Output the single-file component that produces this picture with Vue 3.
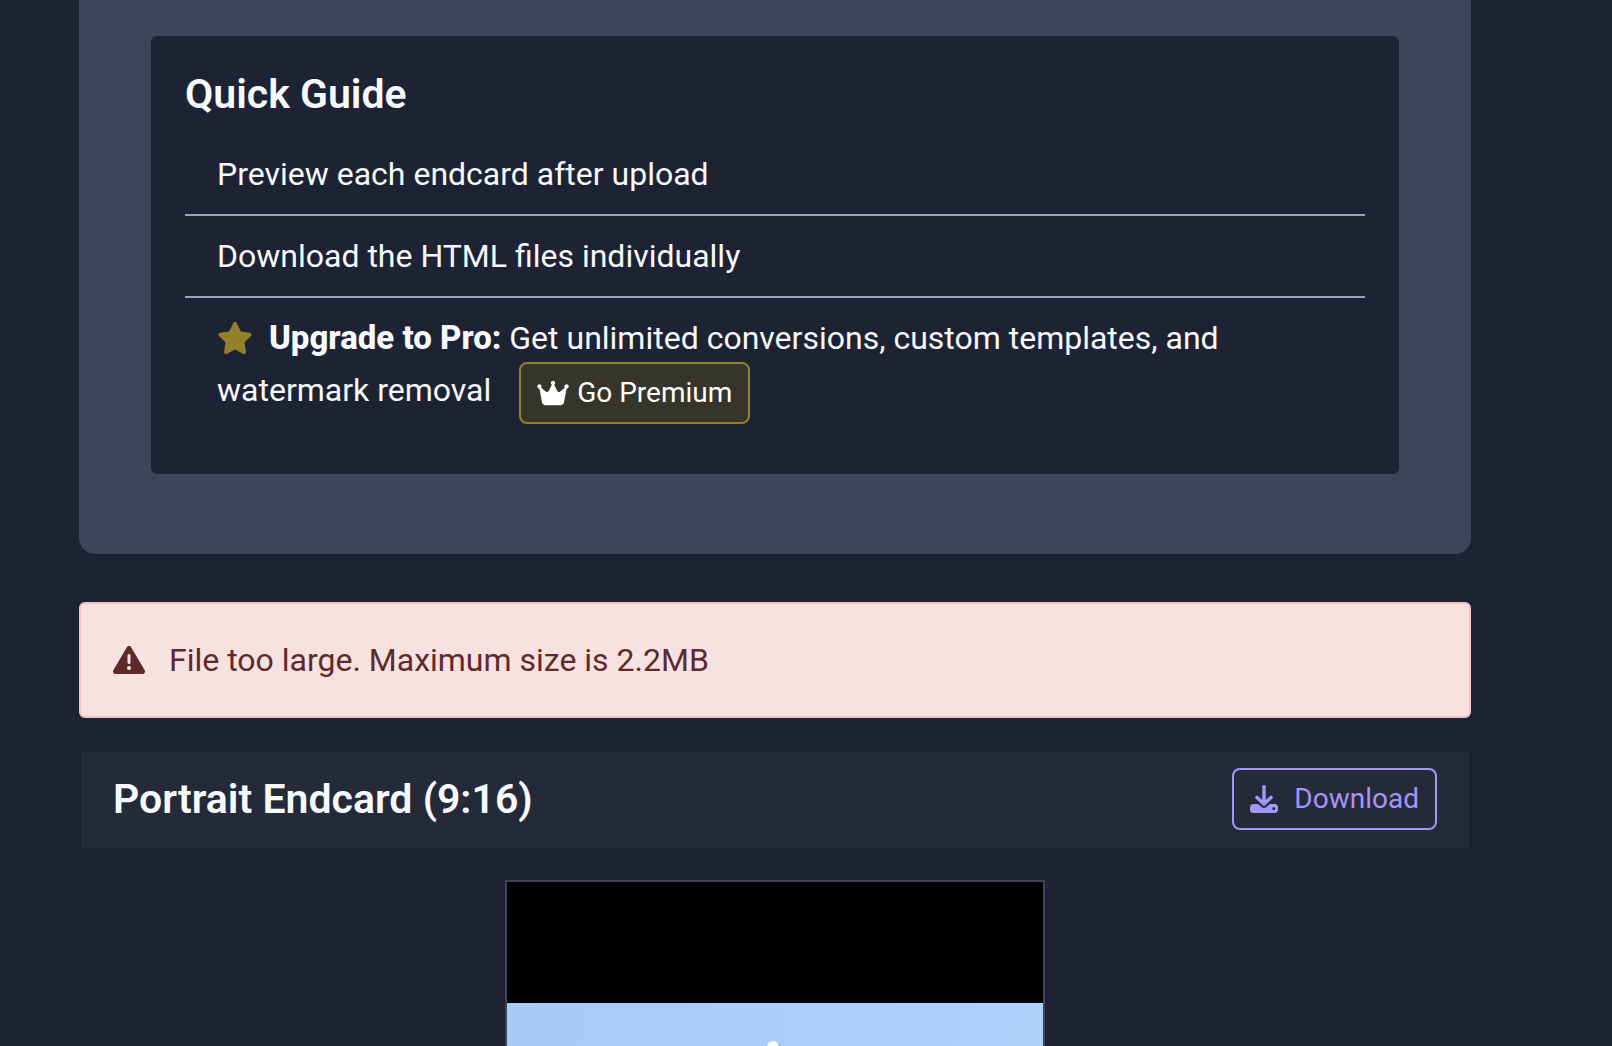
<script setup>
const tips = ['Preview each endcard after upload', 'Download the HTML files individually']
</script>

<template>
  <main class="page">
    <section class="panel">
      <div class="guide">
        <h2 class="title">Quick Guide</h2>
        <ul class="tips">
          <li v-for="tip in tips" :key="tip">{{ tip }}</li>
          <li>
            <svg class="star" viewBox="0 0 576 512" aria-hidden="true"><path d="M316.9 18C311.6 7 300.4 0 288.1 0s-23.4 7-28.8 18L195 150.3 51.4 171.5c-12 1.8-22 10.2-25.7 21.7s-.7 24.2 7.9 32.7L137.8 329 113.2 474.7c-2 12 3 24.2 12.9 31.3s23 8 33.8 2.3l128.3-68.5 128.3 68.5c10.8 5.7 23.9 4.9 33.8-2.3s14.9-19.3 12.9-31.3L438.5 329 542.7 225.9c8.6-8.5 11.7-21.2 7.9-32.7s-13.7-19.9-25.7-21.7L381.2 150.3 316.9 18z" /></svg><strong>Upgrade to Pro:</strong>
            Get unlimited conversions, custom templates, and watermark removal
            <a class="btn premium" href="#premium"><svg class="crown" viewBox="0 0 576 512" aria-hidden="true"><path d="M309 106c11.4-7 19-19.7 19-34c0-22.1-17.9-40-40-40s-40 17.9-40 40c0 14.4 7.6 27 19 34L209.7 220.6c-9.1 18.2-32.7 23.4-48.6 10.7L72 160c5-6.7 8-15 8-24c0-22.1-17.9-40-40-40S0 113.9 0 136s17.9 40 40 40c.2 0 .5 0 .7 0L86.4 427.4c5.5 30.4 32 52.6 63 52.6l277.2 0c30.9 0 57.4-22.1 63-52.6L535.3 176c.2 0 .5 0 .7 0c22.1 0 40-17.9 40-40s-17.9-40-40-40s-40 17.9-40 40c0 9 3 17.3 8 24l-89.1 71.3c-15.9 12.7-39.5 7.5-48.6-10.7L309 106z" /></svg>Go Premium</a>
          </li>
        </ul>
      </div>
    </section>

    <div class="alert" role="alert">
      <svg class="warning" viewBox="0 0 512 512" aria-hidden="true"><path d="M256 32c14.2 0 27.3 7.5 34.5 19.8l216 368c7.3 12.4 7.3 27.7 .2 40.1S486.3 480 472 480L40 480c-14.3 0-27.6-7.7-34.7-20.1s-7-27.8 .2-40.1l216-368C228.7 39.5 241.8 32 256 32zm0 128c-13.3 0-24 10.7-24 24l0 112c0 13.3 10.7 24 24 24s24-10.7 24-24l0-112c0-13.3-10.7-24-24-24zm32 224a32 32 0 1 0 -64 0 32 32 0 1 0 64 0z" /></svg>
      <span>File too large. Maximum size is 2.2MB</span>
    </div>

    <section class="card">
      <header class="card-head">
        <h2 class="title">Portrait Endcard (9:16)</h2>
        <button class="btn download" type="button">
          <svg class="tray" viewBox="0 0 28 28" aria-hidden="true">
            <path d="M14 1.8V18M7 12.4L14 19L21 12.4" fill="none" stroke="currentColor" stroke-width="3.5" stroke-linecap="round" stroke-linejoin="round" />
            <path fill-rule="evenodd" d="M3.5 19H8.2L11.6 22Q14 23.8 16.4 22L19.8 19H24.5Q28 19 28 22.5V24.5Q28 28 24.5 28H3.5Q0 28 0 24.5V22.5Q0 19 3.5 19ZM23.7 22A1.5 1.5 0 1 0 23.7 25A1.5 1.5 0 1 0 23.7 22Z" />
          </svg>
          Download
        </button>
      </header>
      <div class="card-body">
        <div class="preview">
          <div class="letterbox"></div>
          <div class="sky"><span class="tip"></span></div>
        </div>
      </div>
    </section>
  </main>
</template>

<style>
body {
  margin: 0;
  background: #1e2333;
}
</style>

<style scoped>
.page {
  box-sizing: border-box;
  height: 100vh;
  overflow: hidden;
  padding: 0 141px 0 79px;
  background: #1e2333;
  color: #f6f9fd;
  font: 400 32px/48px Roboto, "Liberation Sans", sans-serif;
}

svg {
  fill: currentColor;
}

.title {
  margin: 0;
  font-size: 41px;
  font-weight: 600;
  line-height: 48px;
}

.panel {
  padding: 36px 72px 80px;
  border-radius: 0 0 16px 16px;
  background: #40445a;
}

.guide {
  padding: 34px;
  border-radius: 6px;
  background: #1e2333;
}

.tips {
  margin: 16px 0 0;
  padding: 0;
  list-style: none;
}

.tips li {
  padding: 16px 32px;
}

.tips li:not(:last-child) {
  border-bottom: 2px solid #9fa4bb;
}

.tips strong {
  font-size: 33px;
  font-weight: 800;
}

.star {
  width: 36px;
  height: 32px;
  margin-right: 16px;
  vertical-align: -5px;
  color: #93802a;
}

.btn {
  box-sizing: border-box;
  display: inline-flex;
  align-items: center;
  padding: 8px 16px;
  border: 2px solid currentColor;
  border-radius: 8px;
  background: transparent;
  font: inherit;
  font-size: 28px;
  line-height: 42px;
  text-decoration: none;
}

.premium {
  gap: 8px;
  margin-left: 20px;
  border-color: #93802a;
  background: #36352c;
  color: #fff;
  vertical-align: middle;
}

.crown {
  width: 32px;
  height: 28px;
}

.alert {
  display: flex;
  align-items: center;
  gap: 24px;
  margin-top: 48px;
  padding: 32px;
  border: 2px solid #f5c1c1;
  border-radius: 6px;
  background: #f8e1e1;
  color: #5e2a2b;
}

.warning {
  width: 32px;
  height: 32px;
}

.card {
  margin-top: 32px;
  border: 2px solid #1c2130;
  border-radius: 6px;
}

.card-head {
  display: flex;
  align-items: center;
  justify-content: space-between;
  padding: 16px 32px;
  border-bottom: 2px solid #232836;
  background: #252a38;
}

.download {
  gap: 16px;
  color: #a594f9;
}

.tray {
  width: 28px;
  height: 28px;
}

.card-body {
  padding: 32px;
}

.preview {
  box-sizing: border-box;
  display: flex;
  flex-direction: column;
  width: 540px;
  aspect-ratio: 9 / 16;
  margin: 0 auto;
  border: 2px solid #40445a;
  background: #000;
}

.letterbox {
  height: 121px;
}

.sky {
  flex: 1;
  padding: 38px 4px 0 0;
  background: linear-gradient(100deg, #a7cbf8, #aacffc 50%, #afd4fc);
}

.tip {
  display: block;
  width: 12px;
  height: 12px;
  margin: 0 auto;
  border-radius: 50%;
  background: #fff;
  box-shadow: 2px 2px 2px #6f8fb8;
}
</style>
